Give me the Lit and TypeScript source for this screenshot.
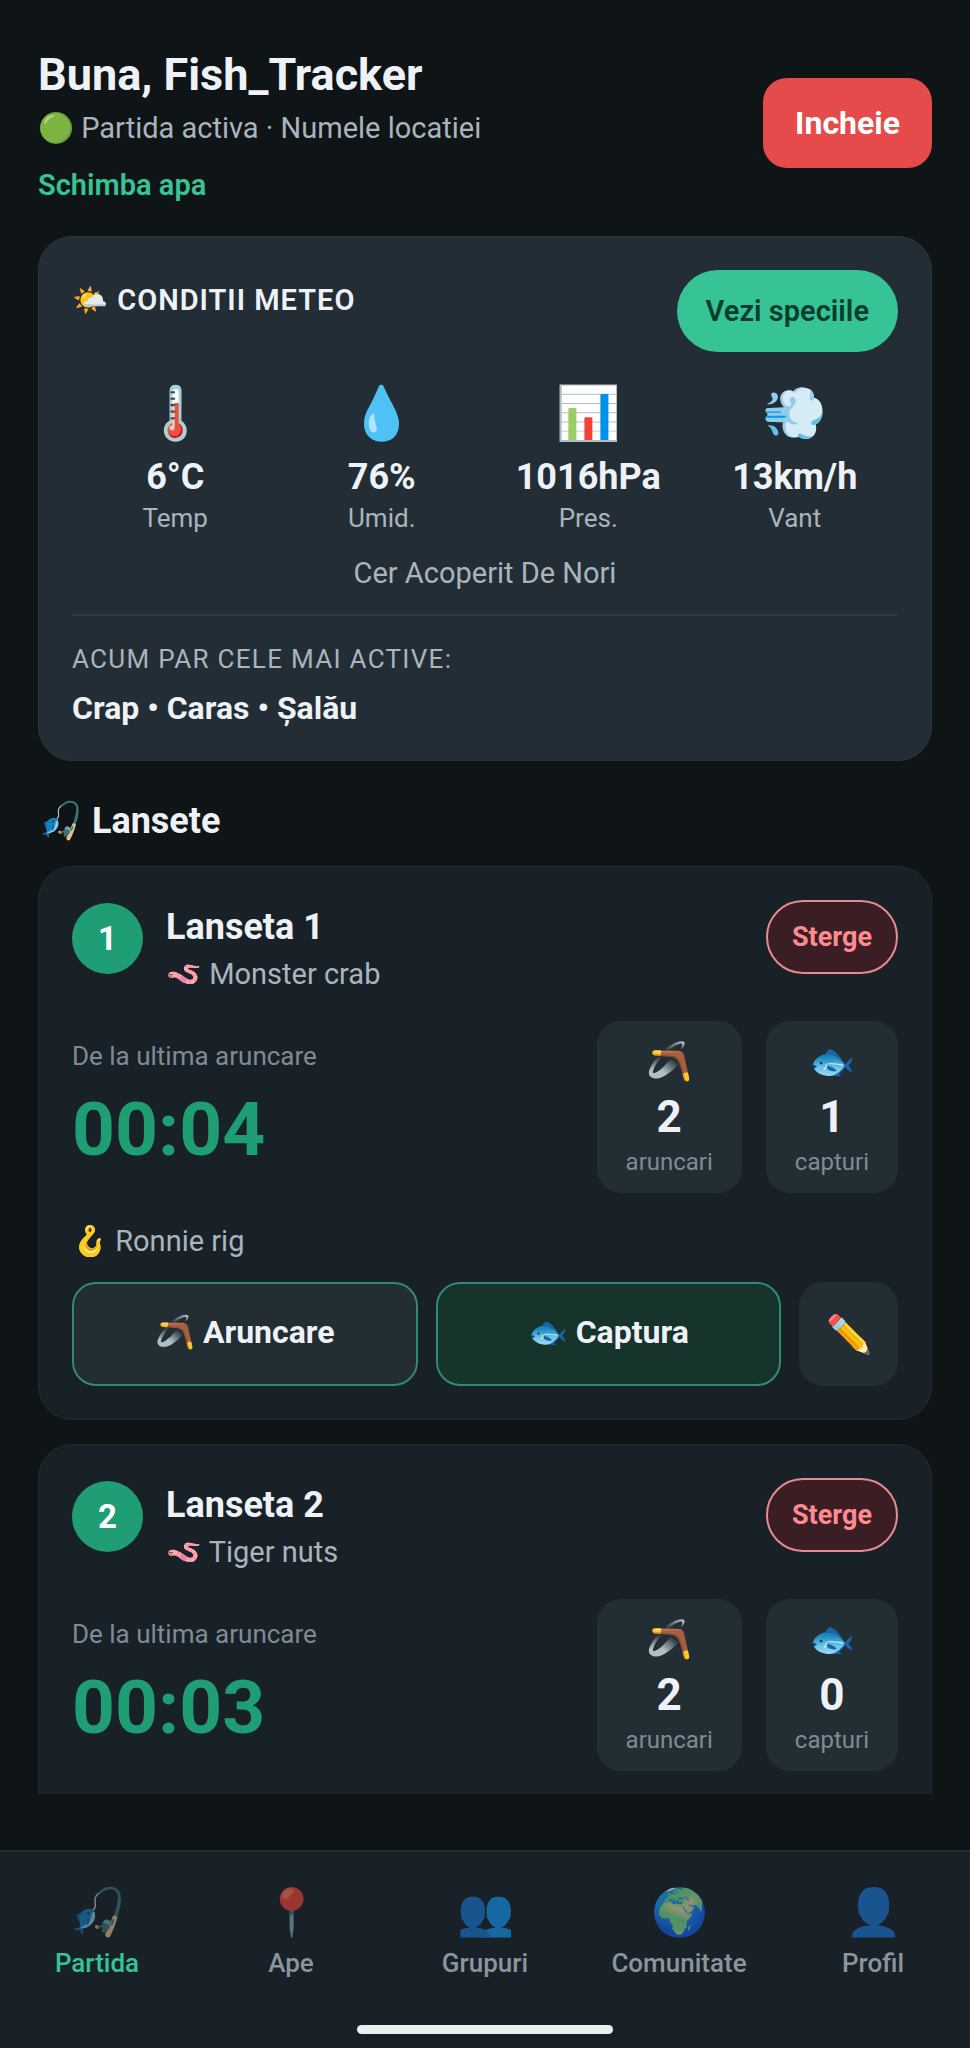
import { LitElement, html, css, nothing } from "lit";
import { customElement, property } from "lit/decorators.js";

interface Reading {
  icon: string;
  value: string;
  label: string;
}

interface Rod {
  id: number;
  bait: string;
  rig?: string;
  elapsed: string;
  casts: number;
  catches: number;
}

interface Tab {
  icon: string;
  label: string;
  href: string;
}

const READINGS: Reading[] = [
  { icon: "🌡️", value: "6°C", label: "Temp" },
  { icon: "💧", value: "76%", label: "Umid." },
  { icon: "📊", value: "1016hPa", label: "Pres." },
  { icon: "💨", value: "13km/h", label: "Vant" },
];

const RODS: Rod[] = [
  { id: 1, bait: "Monster crab", rig: "Ronnie rig", elapsed: "00:04", casts: 2, catches: 1 },
  { id: 2, bait: "Tiger nuts", elapsed: "00:03", casts: 2, catches: 0 },
];

const TABS: Tab[] = [
  { icon: "🎣", label: "Partida", href: "#partida" },
  { icon: "📍", label: "Ape", href: "#ape" },
  { icon: "👥", label: "Grupuri", href: "#grupuri" },
  { icon: "🌍", label: "Comunitate", href: "#comunitate" },
  { icon: "👤", label: "Profil", href: "#profil" },
];

const base = css`
  * {
    box-sizing: border-box;
    margin: 0;
  }
  button {
    border: none;
    font-family: inherit;
    cursor: pointer;
  }
`;

@customElement("weather-card")
export class WeatherCard extends LitElement {
  static styles = [
    base,
    css`
      :host {
        display: block;
        padding: 33px;
        border: 1px solid #2a363d;
        border-radius: 34px;
        background: #222d35;
      }
      .head {
        display: flex;
        justify-content: space-between;
        align-items: flex-start;
        margin-bottom: 24px;
      }
      .title {
        font-size: 29px;
        line-height: 60px;
        font-weight: 600;
        letter-spacing: 1px;
      }
      .species {
        height: 82px;
        padding: 0 29px;
        border-radius: 41px;
        background: #36c497;
        color: #063d2e;
        font-size: 29px;
        font-weight: 600;
      }
      .readings {
        display: grid;
        grid-template-columns: repeat(4, 1fr);
        text-align: center;
      }
      .icon {
        font-size: 52px;
        line-height: 76px;
        margin-bottom: 4px;
      }
      .value {
        font-size: 36px;
        line-height: 42px;
        font-weight: 700;
        margin-bottom: 4px;
      }
      .label {
        font-size: 26px;
        line-height: 32px;
        color: #aab4bd;
      }
      .sky {
        margin: 22px 0 24px;
        text-align: center;
        font-size: 29px;
        line-height: 34px;
        color: #aab4bd;
      }
      .active {
        border-top: 2px solid #2d3940;
        padding-top: 28px;
      }
      .caption {
        font-size: 26px;
        line-height: 30px;
        letter-spacing: 0.05em;
        color: #aab4bd;
        margin-bottom: 15px;
      }
      .fish {
        font-size: 32px;
        line-height: 38px;
        font-weight: 700;
      }
    `,
  ];

  render() {
    return html`
      <div class="head">
        <h2 class="title">🌤️ CONDITII METEO</h2>
        <button class="species" type="button">Vezi speciile</button>
      </div>
      <div class="readings">
        ${READINGS.map(
          (r) => html`
            <div>
              <div class="icon">${r.icon}</div>
              <div class="value">${r.value}</div>
              <div class="label">${r.label}</div>
            </div>
          `
        )}
      </div>
      <p class="sky">Cer Acoperit De Nori</p>
      <div class="active">
        <p class="caption">ACUM PAR CELE MAI ACTIVE:</p>
        <p class="fish">Crap • Caras • Șalău</p>
      </div>
    `;
  }
}

@customElement("rod-card")
export class RodCard extends LitElement {
  static styles = [
    base,
    css`
      :host {
        display: block;
        padding: 33px;
        border: 1px solid #222c32;
        border-radius: 34px;
        background: #192128;
      }
      .head {
        display: flex;
        justify-content: space-between;
        align-items: flex-start;
        margin-bottom: 28px;
      }
      .identity {
        display: flex;
        gap: 23px;
        padding-top: 3px;
      }
      .number {
        display: grid;
        place-items: center;
        width: 71px;
        height: 71px;
        border-radius: 50%;
        background: #1f9e75;
        color: #fff;
        font-size: 33px;
        font-weight: 700;
      }
      .name {
        font-size: 36px;
        line-height: 48px;
        font-weight: 700;
        margin-bottom: 4px;
      }
      .bait {
        font-size: 29px;
        line-height: 38px;
        color: #aab4bd;
      }
      .delete {
        height: 74px;
        padding: 0 24px;
        border: 2px solid #e88a92;
        border-radius: 37px;
        background: #3a1e23;
        color: #ff8a8f;
        font-size: 27px;
        font-weight: 700;
      }
      .status {
        display: flex;
        justify-content: space-between;
        align-items: center;
        margin-bottom: 30px;
      }
      .since {
        font-size: 26px;
        line-height: 32px;
        color: #7f8b94;
        margin-bottom: 12px;
      }
      .timer {
        font-size: 75px;
        line-height: 90px;
        font-weight: 700;
        color: #1f9e75;
      }
      .counts {
        display: flex;
        gap: 24px;
      }
      .count {
        padding: 16px 29px;
        border-radius: 24px;
        background: #222d34;
        text-align: center;
      }
      .count-icon {
        font-size: 37px;
        line-height: 50px;
        margin-bottom: 4px;
      }
      .count-value {
        font-size: 44px;
        line-height: 52px;
        font-weight: 700;
        margin-bottom: 4px;
      }
      .count-label {
        font-size: 24px;
        line-height: 30px;
        color: #7f8b94;
      }
      .rig {
        font-size: 29px;
        line-height: 36px;
        color: #aab4bd;
        margin-bottom: 23px;
      }
      .actions {
        display: grid;
        grid-template-columns: 1fr 1fr 99px;
        gap: 18px;
      }
      .action {
        height: 104px;
        padding: 0 0 4px;
        border: 2px solid #338a71;
        border-radius: 24px;
        background: #222d34;
        color: #eef2f6;
        font-size: 32px;
        font-weight: 700;
      }
      .catch {
        background: #16332c;
      }
      .edit {
        padding: 0;
        border-color: #222d34;
        font-size: 37px;
      }
    `,
  ];

  @property({ attribute: false }) rod!: Rod;

  render() {
    const { id, bait, rig, elapsed, casts, catches } = this.rod;
    return html`
      <div class="head">
        <div class="identity">
          <div class="number">${id}</div>
          <div>
            <h3 class="name">Lanseta ${id}</h3>
            <p class="bait">🪱 ${bait}</p>
          </div>
        </div>
        <button class="delete" type="button">Sterge</button>
      </div>
      <div class="status">
        <div>
          <p class="since">De la ultima aruncare</p>
          <p class="timer">${elapsed}</p>
        </div>
        <div class="counts">
          <div class="count">
            <div class="count-icon">🪃</div>
            <div class="count-value">${casts}</div>
            <div class="count-label">aruncari</div>
          </div>
          <div class="count">
            <div class="count-icon">🐟</div>
            <div class="count-value">${catches}</div>
            <div class="count-label">capturi</div>
          </div>
        </div>
      </div>
      ${rig
        ? html`
            <p class="rig">🪝 ${rig}</p>
            <div class="actions">
              <button class="action" type="button">🪃 Aruncare</button>
              <button class="action catch" type="button">🐟 Captura</button>
              <button class="action edit" type="button" aria-label="Editeaza">✏️</button>
            </div>
          `
        : nothing}
    `;
  }
}

@customElement("tab-bar")
export class TabBar extends LitElement {
  static styles = [
    base,
    css`
      :host {
        display: block;
        border-top: 2px solid #232d33;
        background: #192128;
        padding: 30px 0 14px;
      }
      .tabs {
        display: grid;
        grid-template-columns: repeat(5, 1fr);
        margin-bottom: 46px;
      }
      .tab {
        text-align: center;
        text-decoration: none;
        color: #8b959e;
      }
      .current {
        color: #36c497;
      }
      .icon {
        display: block;
        font-size: 46px;
        line-height: 60px;
        margin-bottom: 5px;
        color: #000;
        opacity: 0.6;
      }
      .label {
        display: block;
        font-size: 26px;
        line-height: 32px;
        font-weight: 500;
      }
      .handle {
        width: 256px;
        height: 9px;
        margin: 0 auto;
        border-radius: 5px;
        background: #eceff0;
      }
    `,
  ];

  render() {
    return html`
      <nav class="tabs">
        ${TABS.map(
          (t, i) => html`
            <a class="tab ${i === 0 ? "current" : ""}" href=${t.href}>
              <span class="icon">${t.icon}</span>
              <span class="label">${t.label}</span>
            </a>
          `
        )}
      </nav>
      <div class="handle"></div>
    `;
  }
}

@customElement("app-root")
export class AppRoot extends LitElement {
  static styles = [
    base,
    css`
      :host {
        display: flex;
        flex-direction: column;
        height: 100vh;
        background: #0f1416;
        color: #eef2f6;
        font-family: Roboto, sans-serif;
      }
      .content {
        flex: 1;
        min-height: 0;
        overflow: hidden;
        padding: 44px 38px 0;
        margin-bottom: 56px;
      }
      .greeting {
        display: flex;
        justify-content: space-between;
        align-items: center;
        margin-bottom: 34px;
      }
      .hello {
        font-size: 45px;
        line-height: 62px;
        font-weight: 700;
        margin-bottom: 5px;
      }
      .session {
        font-size: 29px;
        line-height: 34px;
        color: #aab4bd;
        margin-bottom: 23px;
      }
      .change {
        display: block;
        font-size: 29px;
        line-height: 34px;
        font-weight: 600;
        color: #36c497;
        text-decoration: none;
      }
      .finish {
        height: 90px;
        padding: 0 32px;
        border-radius: 24px;
        background: #e54b4b;
        color: #fff;
        font-size: 32px;
        font-weight: 700;
      }
      .section {
        font-size: 36px;
        line-height: 44px;
        font-weight: 700;
        margin: 38px 0 23px;
      }
      .rods {
        display: grid;
        gap: 24px;
      }
    `,
  ];

  render() {
    return html`
      <main class="content">
        <header class="greeting">
          <div>
            <h1 class="hello">Buna, Fish_Tracker</h1>
            <p class="session">🟢 Partida activa · Numele locatiei</p>
            <a class="change" href="#apa">Schimba apa</a>
          </div>
          <button class="finish" type="button">Incheie</button>
        </header>
        <weather-card></weather-card>
        <h2 class="section">🎣 Lansete</h2>
        <div class="rods">${RODS.map((rod) => html`<rod-card .rod=${rod}></rod-card>`)}</div>
      </main>
      <tab-bar></tab-bar>
    `;
  }
}
